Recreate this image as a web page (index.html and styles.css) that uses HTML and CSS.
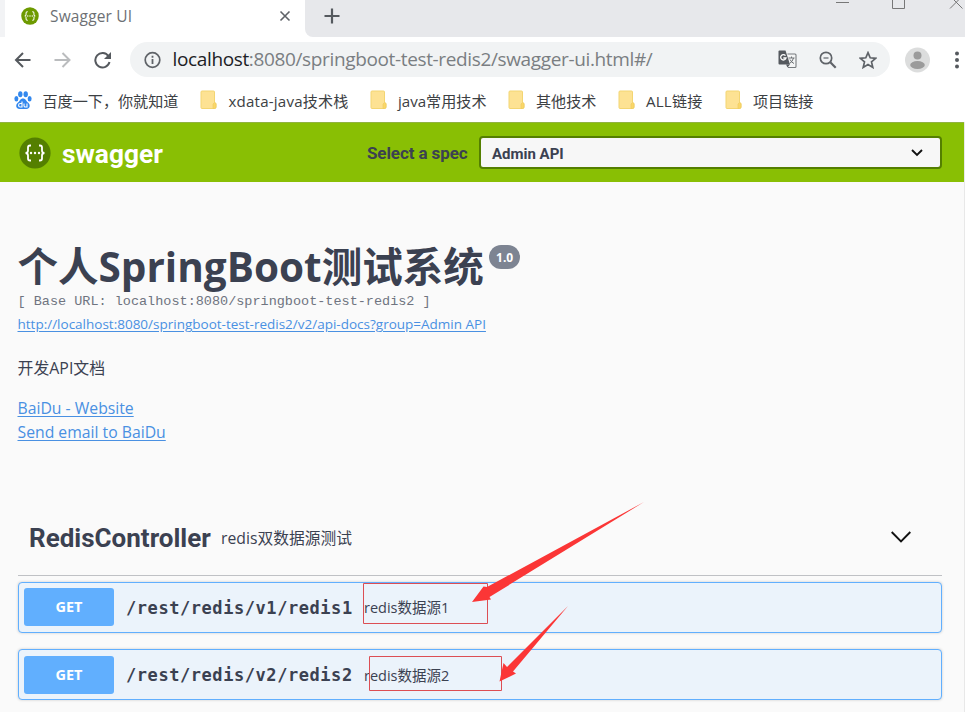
FILE: index.html
```html
<!DOCTYPE html>
<html lang="zh-CN">
<head>
<meta charset="utf-8">
<title>Swagger UI</title>
<link rel="stylesheet" href="styles.css">
</head>
<body>
<svg class="defs" width="0" height="0">
  <symbol id="folder" viewBox="0 0 18 20"><path d="M2 1h11.500q1 0 1 1v10l1.500 1.500V17q0 1.500-1.500 1.500H2q-1 0-1-1V2q0-1 1-1z" fill="#fde293" stroke="#f3d572"/><path d="M13 18.500v-4.500l1.500-1.500 1.500 1.500V17q0 1.500-1.500 1.500z" fill="#fbd768" stroke="#eecb61" stroke-width=".7"/></symbol>
  <symbol id="braces" viewBox="0 0 32 32"><circle cx="16" cy="16" r="15.600"/><g fill="none" stroke="#fff" stroke-width="1.800"><path d="M12 8.500h-1q-2 0-2 2v3q0 2.500-2.500 2.500 2.500 0 2.500 2.500v3q0 2 2 2h1M20 8.500h1q2 0 2 2v3q0 2.500 2.500 2.500-2.500 0-2.500 2.500v3q0 2-2 2h-1"/></g><g fill="#fff"><circle cx="12" cy="16" r="1.200"/><circle cx="16" cy="16" r="1.200"/><circle cx="20" cy="16" r="1.200"/></g></symbol>
</svg>

<div class="tabstrip">
  <div class="tab">
    <svg class="favicon" width="18" height="18"><use href="#braces"/></svg>
    <span class="tab-title">Swagger UI</span>
    <svg width="12" height="12" viewBox="0 0 12 12"><path d="M1.500 1.500l9 9M10.500 1.500l-9 9" stroke="#5f6368" stroke-width="1.600"/></svg>
  </div>
  <div class="strip-rest">
    <svg class="plus" width="16" height="16" viewBox="0 0 16 16"><path d="M8 .500v15M.500 8h15" stroke="#55595e" stroke-width="2.200"/></svg>
    <svg class="winctl" width="130" height="12" viewBox="0 0 130 12" fill="none" stroke="#777"><path d="M1 2.500h13M57.500-4v12.500h12V-4M115-4l12.500 12.500M127.500-4L115 8.500"/></svg>
  </div>
</div>

<div class="toolbar">
  <svg class="nav" width="18" height="16" viewBox="0 0 18 16" fill="none" stroke="#55595e" stroke-width="2"><path d="M16.500 8H2M9 1L2 8l7 7"/></svg>
  <svg class="nav" width="18" height="16" viewBox="0 0 18 16" fill="none" stroke="#babcbe" stroke-width="2"><path d="M.500 8H15M8.500 1l7 7-7 7"/></svg>
  <svg class="nav" width="18" height="18" viewBox="0 0 18 18"><path d="M14.500 5.200A7.200 7.200 0 1 0 15.500 11" fill="none" stroke="#55595e" stroke-width="2"/><path d="M17 1v7h-7z" fill="#55595e"/></svg>
  <div class="omnibox">
    <svg width="18" height="18" viewBox="0 0 18 18"><circle cx="8.500" cy="9" r="7.300" fill="none" stroke="#5f6368" stroke-width="1.700"/><path d="M8.500 8v5M8.500 4.800v1.900" stroke="#5f6368" stroke-width="1.800"/></svg>
    <span class="url"><b>localhost</b>:8080/springboot-test-redis2/swagger-ui.html#/</span>
    <svg class="ic-tr" width="19" height="19" viewBox="0 0 19 19"><path d="M9.500 4h7.500q1 0 1 1v11.500q0 1-1 1H10" fill="#f4f5f5" stroke="#777b7f" stroke-width="1.100"/><path d="M1.500.5h6l4.500 14H1.500q-1 0-1-1v-12q0-1 1-1z" fill="#55595e"/><path d="M8 14.500h4l-2.500 3z" fill="#55595e"/><path d="M7.500 5.600A2.700 2.700 0 1 0 8 8H5.300" fill="none" stroke="#fff" stroke-width="1.300"/><path d="M10.500 8h6M13.500 6.500V8M15.500 8q-1 4-4 5.500M12 9.500q1.500 3 4 4" fill="none" stroke="#6c7074"/></svg>
    <svg class="ic-zoom" width="18" height="18" viewBox="0 0 18 18" fill="none" stroke="#5f6368"><circle cx="7" cy="7" r="5.700" stroke-width="1.700"/><path d="M11.300 11.300l5.400 5.400" stroke-width="2.200"/><path d="M4.500 7h5" stroke-width="1.200"/></svg>
    <svg width="18" height="18" viewBox="0 0 18 18"><path d="M9 1.700l2.200 5.100 5.500.5-4.200 3.600 1.300 5.500L9 13.500l-4.800 2.900 1.300-5.500-4.200-3.600 5.500-.5z" fill="none" stroke="#5f6368" stroke-width="1.700"/></svg>
  </div>
  <svg class="avatar" width="26" height="26" viewBox="0 0 26 26"><circle cx="13.500" cy="13" r="12.500" fill="#dcdddd"/><circle cx="13.500" cy="8.500" r="4" fill="#9b9b9b"/><ellipse cx="13.500" cy="18" rx="7.300" ry="4" fill="#9b9b9b"/></svg>
  <svg class="dots" width="6" height="18" viewBox="0 0 6 18" fill="#55595e"><circle cx="3" cy="2.500" r="2"/><circle cx="3" cy="9" r="2"/><circle cx="3" cy="15.500" r="2"/></svg>
</div>

<div class="bookmarks">
  <div class="bm bm-1"><svg width="18" height="19" viewBox="0 0 18 19" fill="#3388ee"><ellipse cx="6.300" cy="3.200" rx="2.200" ry="3"/><ellipse cx="11.700" cy="3.200" rx="2.200" ry="3"/><ellipse cx="2.400" cy="7.700" rx="2" ry="2.700"/><ellipse cx="15.600" cy="7.700" rx="2" ry="2.700"/><path d="M9 7.500c2.800 0 3 2.500 5 4 3 2.500 1.800 6.500-1.500 6.500H5.500C2 18 1 14 4 11.500c2-1.500 2.200-4 5-4z"/><path d="M8 10.500V16H6.300a1.700 1.700 0 0 1 0-3.500H8M10 12.500v2.200q0 1.300 1.300 1.300h1.700v-3.500" fill="none" stroke="#fff" stroke-width="1.100"/></svg><span>百度一下，你就知道</span></div>
  <div class="bm bm-2"><svg width="18" height="20"><use href="#folder"/></svg><span>xdata-java技术栈</span></div>
  <div class="bm bm-3"><svg width="18" height="20"><use href="#folder"/></svg><span>java常用技术</span></div>
  <div class="bm bm-4"><svg width="18" height="20"><use href="#folder"/></svg><span>其他技术</span></div>
  <div class="bm bm-5"><svg width="18" height="20"><use href="#folder"/></svg><span>ALL链接</span></div>
  <div class="bm bm-6"><svg width="18" height="20"><use href="#folder"/></svg><span>项目链接</span></div>
</div>

<main class="page">
  <header class="topbar">
    <svg class="logo" width="32" height="32"><use href="#braces"/></svg>
    <span class="brand">swagger</span>
    <label class="spec-label">Select a spec</label>
    <div class="spec"><span>Admin API</span><svg width="12" height="8" viewBox="0 0 12 8"><path d="M1 1l5 5 5-5" fill="none" stroke="#111" stroke-width="1.900"/></svg></div>
  </header>

  <section class="info">
    <h1 class="title"><span>个人SpringBoot测试系统</span><small>1.0</small></h1>
    <pre class="base">[ Base URL: localhost:8080/springboot-test-redis2 ]</pre>
    <div class="docs"><a>http://localhost:8080/springboot-test-redis2/v2/api-docs?group=Admin API</a></div>
    <p class="desc">开发API文档</p>
    <div class="contact"><a>BaiDu - Website</a></div>
    <div class="contact"><a>Send email to BaiDu</a></div>
  </section>

  <section class="controller">
    <h2 class="tag"><span class="tag-name">RedisController</span><span class="tag-desc">redis双数据源测试</span><svg width="20" height="12" viewBox="0 0 20 12"><path d="M.7 1L10 10.300 19.300 1" fill="none" stroke="#111" stroke-width="1.900"/></svg></h2>
    <div class="op"><span class="method">GET</span><span class="path">/rest/redis/v1/redis1</span><span class="summary">redis数据源1</span></div>
    <div class="op"><span class="method">GET</span><span class="path">/rest/redis/v2/redis2</span><span class="summary">redis数据源2</span></div>
  </section>
</main>

<svg class="marks" width="965" height="712" viewBox="0 0 965 712">
  <g fill="none" stroke="#dc4e54"><path d="M363.500 583.500h124v40h-124zM369.500 656.500h132v34h-132z"/></g>
  <g fill="#fb3636"><path d="M644 502L487 587 483.500 586.500 472 602 491 599.500 489.500 597z"/><path d="M568 606L507 667 503.500 663 499.500 681.500 516 673.500 513 671.500z"/></g>
</svg>
</body>
</html>
```
FILE: styles.css
```css
* { box-sizing: border-box; }
body { margin: 0; width: 965px; height: 712px; overflow: hidden; background: #fff; font-family: "Open Sans", "Noto Sans CJK SC", sans-serif; color: #3b4151; }
svg { display: block; flex: none; }
span, a, label { white-space: nowrap; }
.defs { position: absolute; }

.tabstrip { display: flex; height: 37px; background: #fff; }
.tab { display: flex; align-items: center; width: 305px; height: 37px; padding: 0 14px 5px 16px; background: #fff; border-left: 5px solid #f2f3f5; }
.favicon { fill: #6d9a00; }
.tab-title { flex: 1; margin-left: 11px; font-size: 15.500px; color: #6d7074; letter-spacing: .15px; }
.strip-rest { display: flex; flex: 1; justify-content: space-between; background: #e7e8eb; border-bottom-left-radius: 8px; }
.plus { margin: 8px 0 0 19px; }

.toolbar { display: flex; align-items: center; height: 45px; padding-left: 14px; }
.nav { margin-right: 22px; }
.omnibox { display: flex; align-items: center; width: 760px; height: 35px; margin-left: -4px; padding: 0 13px 0 14px; border-radius: 18px; background: #f1f3f4; }
.url { flex: 1; margin: -2px 0 0 10.500px; font-size: 19px; color: #7a7e82; letter-spacing: -.36px; }
.url b { font-weight: 400; color: #202124; }
.ic-tr { margin-right: 22px; }
.ic-zoom { margin-right: 22px; }
.avatar { margin-left: 14px; }
.dots { margin-left: 24px; }

.bookmarks { display: flex; height: 40px; padding-left: 14px; }
.bm { display: flex; align-items: center; height: 36px; font-size: 15.100px; color: #3c4043; }
.bm span { margin: -1px 0 0 10.500px; }
.bm-1 { width: 186px; }
.bm-2 { width: 169.500px; letter-spacing: .2px; }
.bm-3 { width: 138px; }
.bm-4 { width: 110px; }
.bm-5 { width: 107px; letter-spacing: .2px; }

.page { height: 590px; background: #fafafa; border-right: 1px solid #e8e8e8; }
.topbar { display: flex; align-items: center; height: 60px; padding: 0 22px 0 19px; background: #89bf04; border-top: 1px solid #91b340; color: #3b4151; font-family: Roboto, sans-serif; font-weight: 700; }
.logo { fill: #547f00; }
.brand { width: 305px; margin: 2px 0 0 11px; font-size: 26.300px; color: #fff; }
.spec-label { width: 112px; font-size: 17px; letter-spacing: -.1px; }
.spec { display: flex; align-items: center; justify-content: space-between; width: 463px; height: 33px; padding: 0 17px 0 11px; border: 2px solid #547f00; border-radius: 4px; background: #f7f7f7; font-size: 15px; }
.spec span { margin-top: 2px; }

.info { height: 334px; padding: 57px 0 0 17.500px; }
.title { display: flex; margin: 0; height: 54px; font-size: 40.500px; line-height: 56px; font-weight: 700; }
.title small { width: 31px; height: 24px; margin: 6px 0 0 5.500px; border-radius: 12px; background: #7d8492; color: #fff; font-size: 12px; line-height: 25px; text-align: center; }
.base { margin: 0; height: 18px; font: 13.500px/18px "Liberation Mono", monospace; color: #6f7480; }
a { color: #4990e2; text-decoration: underline; text-underline-offset: 2px; }
.docs { height: 24px; font-size: 13.500px; line-height: 26px; }
.desc { height: 24px; margin: 20px 0 15px; font-size: 15.900px; line-height: 26px; }
.contact { height: 24px; font-size: 15.750px; line-height: 28px; }

.controller { padding: 0 22px 0 18px; }
.tag { display: flex; align-items: center; height: 60px; margin: 0 0 6px; padding: 0 31px 17px 11px; border-bottom: 1px solid #bfc1c5; font-weight: 400; }
.tag-name { width: 192px; margin-top: 2px; font: 700 26px/40px Roboto, sans-serif; }
.tag-desc { flex: 1; font-size: 15.750px; }
.op { display: flex; align-items: center; height: 51px; margin-bottom: 16px; padding: 0 5px 2px; border: 1px solid #61affe; border-radius: 4px; background: #ebf3fb; box-shadow: 0 0 3px rgba(0,0,0,.19); }
.op + .op { padding-bottom: 0; }
.method { width: 90px; height: 38px; border-radius: 3px; background: #61affe; color: #fff; font: 700 14.500px/38px "Open Sans", sans-serif; text-align: center; }
.path { width: 238px; margin: 2px 0 0 12px; font: 700 17px/24px "DejaVu Sans Mono", monospace; letter-spacing: .56px; }
.summary { font-size: 14.500px; }
.op + .op .path { margin-top: 0; }

.marks { position: absolute; top: 0; left: 0; }
```
